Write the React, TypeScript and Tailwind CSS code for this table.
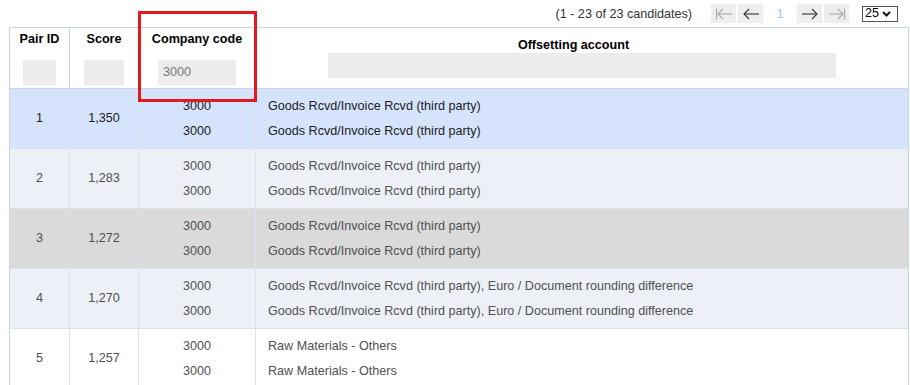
import React from "react";

type Row = { id: number; score: string; accounts: string[]; bg: string; text: string };

const rows: Row[] = [
  { id: 1, score: "1,350", accounts: ["Goods Rcvd/Invoice Rcvd (third party)", "Goods Rcvd/Invoice Rcvd (third party)"], bg: "bg-[#d5e3fc]", text: "text-[#1c1c1c]" },
  { id: 2, score: "1,283", accounts: ["Goods Rcvd/Invoice Rcvd (third party)", "Goods Rcvd/Invoice Rcvd (third party)"], bg: "bg-[#edf1f7]", text: "text-[#505050]" },
  { id: 3, score: "1,272", accounts: ["Goods Rcvd/Invoice Rcvd (third party)", "Goods Rcvd/Invoice Rcvd (third party)"], bg: "bg-[#dadada]", text: "text-[#505050]" },
  { id: 4, score: "1,270", accounts: ["Goods Rcvd/Invoice Rcvd (third party), Euro / Document rounding difference", "Goods Rcvd/Invoice Rcvd (third party), Euro / Document rounding difference"], bg: "bg-[#edf1f7]", text: "text-[#505050]" },
  { id: 5, score: "1,257", accounts: ["Raw Materials - Others", "Raw Materials - Others"], bg: "bg-white", text: "text-[#505050]" },
];

function Arrow({ dir, bar, color }: { dir: "left" | "right"; bar?: boolean; color: string }) {
  return (
    <svg width="18" height="12" viewBox="0 0 18 12" fill="none" stroke={color} strokeWidth="1.1">
      {dir === "left" ? (
        <>
          {bar && <line x1="1.5" y1="0.5" x2="1.5" y2="11.5" />}
          <line x1={bar ? 3 : 2} y1="6" x2="17" y2="6" />
          <polyline points={bar ? "8,1 3,6 8,11" : "7,1 2,6 7,11"} />
        </>
      ) : (
        <>
          {bar && <line x1="16.5" y1="0.5" x2="16.5" y2="11.5" />}
          <line x1="1" y1="6" x2={bar ? 15 : 16} y2="6" />
          <polyline points={bar ? "10,1 15,6 10,11" : "11,1 16,6 11,11"} />
        </>
      )}
    </svg>
  );
}

export default function App() {
  return (
    <div className="relative w-[910px] h-[385px] overflow-hidden bg-white text-[12.6px] font-['Liberation_Sans',Arial,sans-serif]">
      {/* top bar */}
      <div className="h-[27px] flex items-center justify-end pr-[12px]">
        <span className="text-[#333] leading-none pt-[2px]">(1 - 23 of 23 candidates)</span>
        <div className="ml-[19px] w-[25px] h-[19px] bg-[#eeeeee] flex items-center justify-center">
          <Arrow dir="left" bar color="#a8a8a8" />
        </div>
        <div className="ml-[2px] w-[25px] h-[19px] bg-[#eeeeee] flex items-center justify-center">
          <Arrow dir="left" color="#333" />
        </div>
        <div className="w-[34px] h-[19px] flex items-center justify-center text-[#9cc8f2] text-[13px]">1</div>
        <div className="w-[25px] h-[19px] bg-[#eeeeee] flex items-center justify-center">
          <Arrow dir="right" color="#333" />
        </div>
        <div className="ml-[2px] w-[25px] h-[19px] bg-[#eeeeee] flex items-center justify-center">
          <Arrow dir="right" bar color="#a8a8a8" />
        </div>
        <div className="ml-[13px] w-[36px] h-[16px] border border-[#555] flex items-center pl-[2px] text-black leading-none">
          <span>25</span>
          <svg className="ml-[3px]" width="9" height="6" viewBox="0 0 9 6" fill="none" stroke="#111" strokeWidth="2">
            <polyline points="1,1 4.5,4.5 8,1" />
          </svg>
        </div>
      </div>

      {/* table */}
      <div className="ml-[9px] w-[900px] border-x border-t border-[#c9d6df]">
        {/* header */}
        <div className="grid grid-cols-[60px_69px_117px_1fr] h-[61px] border-b border-[#c9d6df] font-bold text-black">
          <div className="border-r border-[#c9d6df] flex flex-col items-center pt-[3px]">
            <div className="leading-[16px]">Pair ID</div>
            <div className="mt-[13px] w-[33px] h-[25px] bg-[#ececec]" />
          </div>
          <div className="border-r border-[#c9d6df] flex flex-col items-center pt-[3px]">
            <div className="leading-[16px]">Score</div>
            <div className="mt-[13px] w-[40px] h-[25px] bg-[#ececec]" />
          </div>
          <div className="border-r border-[#c9d6df] flex flex-col items-center pt-[3px]">
            <div className="leading-[16px]">Company code</div>
            <div className="mt-[13px] w-[78px] h-[25px] bg-[#ececec] font-normal text-[#777] flex items-center pl-[5px]">3000</div>
          </div>
          <div className="flex flex-col items-center pt-[9px]">
            <div className="leading-[16px] mr-[17px]">Offsetting account</div>
            <div className="w-[508px] h-[25px] bg-[#ececec]" />
          </div>
        </div>

        {/* rows */}
        {rows.map((r) => (
          <div
            key={r.id}
            className={`grid grid-cols-[60px_69px_117px_1fr] h-[60px] border-b border-[#dce3ea] ${r.bg} ${r.text}`}
          >
            <div className="border-r border-[#dce3ea] flex items-center justify-center">{r.id}</div>
            <div className="border-r border-[#dce3ea] flex items-center justify-center">{r.score}</div>
            <div className="border-r border-[#dce3ea] flex flex-col items-center justify-center">
              <div className="leading-[25px]">3000</div>
              <div className="leading-[25px]">3000</div>
            </div>
            <div className="flex flex-col justify-center pl-[12px]">
              {r.accounts.map((a, i) => (
                <div key={i} className="leading-[25px] whitespace-nowrap">{a}</div>
              ))}
            </div>
          </div>
        ))}
      </div>

      {/* annotation box */}
      <div className="absolute left-[138px] top-[11px] w-[119px] h-[91px] border-[3px] border-[#e3191f] pointer-events-none" />
    </div>
  );
}
